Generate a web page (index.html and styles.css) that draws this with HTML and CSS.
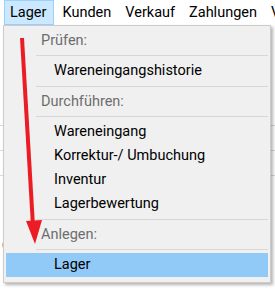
FILE: index.html
```html
<!DOCTYPE html>
<html lang="de">
<head>
    <meta charset="UTF-8">
    <title>Lager</title>
    <link rel="stylesheet" href="styles.css">
</head>
<body>

    <div class="menubar">
        <div class="menu-item active">Lager</div>
        <div class="menu-item">Kunden</div>
        <div class="menu-item">Verkauf</div>
        <div class="menu-item">Zahlungen</div>
        <div class="menu-item">V</div>
    </div>

    <div class="app">
        <div class="app-line"></div>
        <div class="app-line"></div>
        <div class="app-line"></div>
        <div class="app-foot">d</div>
    </div>

    <div class="dropdown">
        <div class="group-title">Prüfen:</div>
        <div class="sep"></div>
        <div class="group">
            <div class="entry">Wareneingangshistorie</div>
        </div>
        <div class="sep"></div>
        <div class="group-title">Durchführen:</div>
        <div class="sep"></div>
        <div class="group">
            <div class="entry">Wareneingang</div>
            <div class="entry">Korrektur-/ Umbuchung</div>
            <div class="entry">Inventur</div>
            <div class="entry">Lagerbewertung</div>
        </div>
        <div class="sep"></div>
        <div class="group-title">Anlegen:</div>
        <div class="sep"></div>
        <div class="group">
            <div class="entry selected">Lager</div>
        </div>
    </div>

    <!-- roter Pfeil über dem Menü -->
    <svg class="arrow" width="275" height="289" viewBox="0 0 275 289">
        <line x1="22" y1="38" x2="33" y2="226" stroke="#ec1c24" stroke-width="4"/>
        <polygon points="26,221 42,220 35,244" fill="#ec1c24"/>
    </svg>

</body>
</html>
```

FILE: styles.css
```css
body {
    margin: 0;
    font-family: Roboto, "Noto Sans", sans-serif;
    font-size: 14.5px;
    background: #fff;
    color: #000;
    width: 275px;
    height: 289px;
    overflow: hidden;
}
.menubar {
    display: flex;
    height: 25px;
    padding-left: 4px;
    background: #fff;
    white-space: nowrap;
}
.menu-item {
    padding: 0 7px 0 5px;
    line-height: 23px;
    border: 1px solid transparent;
    height: 23px;
}
.menu-item:nth-child(2) {
    padding-left: 7px;
}
.menu-item.active {
    background: #cce8ff;
    border-color: #99d1ff;
}
.app {
    padding-top: 100px;
}
.app-line {
    height: 1px;
    background: #d9d9d9;
    margin-bottom: 24px;
}
.app-foot {
    margin-top: 60px;
    padding-left: 2px;
    color: #222;
}
.dropdown {
    position: absolute; /* Menü liegt über dem Fenster */
    left: 3px;
    top: 25px;
    width: 266px;
    background: #f0f0f0;
    border: 1px solid #cccccc;
    box-shadow: 2px 2px 3px rgba(0, 0, 0, 0.3);
    padding: 0 0 2px 0;
}
.group-title {
    height: 29px;
    line-height: 30px;
    padding-left: 37px;
    color: #6d6d6d;
}
.sep {
    height: 1px;
    background: #d7d7d7;
    margin-left: 32px;
    margin-right: 2px;
}
.group {
    padding: 3px 2px 3px 2px;
}
.entry {
    height: 24px;
    line-height: 24px;
    padding-left: 48px;
}
.entry.selected {
    background: #91c9f7;
}
.arrow {
    position: absolute;
    left: 0;
    top: 0;
}
```
